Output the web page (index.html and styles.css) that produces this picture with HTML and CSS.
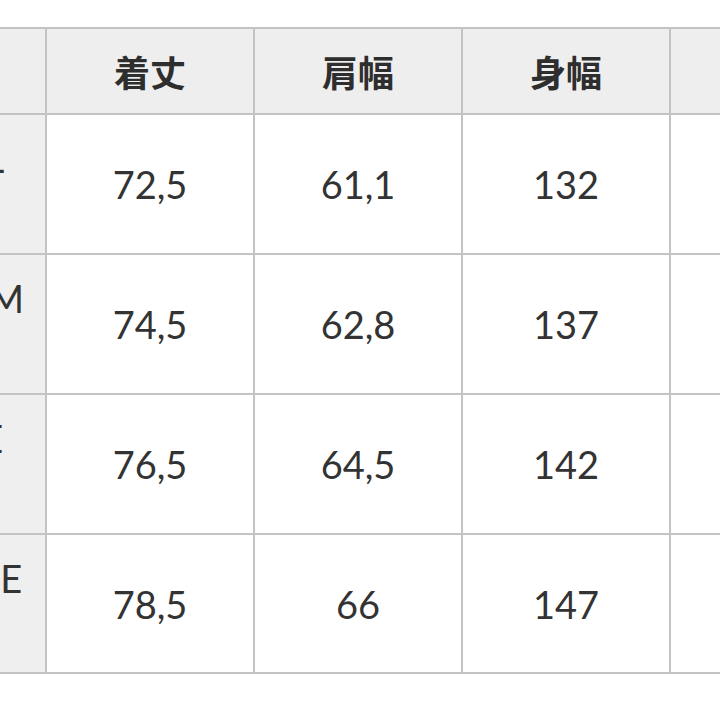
FILE: index.html
```html
<!DOCTYPE html>
<html lang="ja">
<head>
<meta charset="utf-8">
<title>サイズ表</title>
<link rel="stylesheet" href="styles.css">
</head>
<body>
<div class="sheet">
  <table class="size-table">
    <colgroup>
      <col class="c"><col class="c"><col class="c"><col class="c"><col class="c">
    </colgroup>
    <thead>
      <tr>
        <th class="corner"></th>
        <th>着丈</th>
        <th>肩幅</th>
        <th>身幅</th>
        <th class="more"></th>
      </tr>
    </thead>
    <tbody>
      <tr>
        <th class="label">SMALL</th>
        <td>72,5</td><td>61,1</td><td>132</td><td class="more"></td>
      </tr>
      <tr>
        <th class="label">MEDIUM</th>
        <td>74,5</td><td>62,8</td><td>137</td><td class="more"></td>
      </tr>
      <tr>
        <th class="label">LARGE</th>
        <td>76,5</td><td>64,5</td><td>142</td><td class="more"></td>
      </tr>
      <tr class="last">
        <th class="label">X-LARGE</th>
        <td>78,5</td><td>66</td><td>147</td><td class="more"></td>
      </tr>
    </tbody>
  </table>
</div>
</body>
</html>
```

FILE: styles.css
```css
html, body {
  margin: 0;
  padding: 0;
  background: #ffffff;
  overflow: hidden;
}

body {
  width: 720px;
  height: 720px;
}

.sheet {
  margin-left: -163px;
  padding-top: 27px;
}

.size-table {
  border-collapse: collapse;
  table-layout: fixed;
  width: 1042px;
  font-family: Lato, "Noto Sans CJK JP", sans-serif;
  color: #333333;
}

.size-table .c {
  width: 208px;
}

.size-table th,
.size-table td {
  border: 2px solid #c3c3c3;
  text-align: center;
  padding: 0;
}

.size-table thead th {
  height: 84px;
  background: #eeeeee;
  font-family: "Noto Sans CJK JP", sans-serif;
  font-weight: 700;
  font-size: 36px;
  color: #2e2e2e;
}

.size-table tbody td {
  height: 138px;
  font-size: 38px;
  font-weight: 400;
  background: #ffffff;
  vertical-align: middle;
}

.size-table tbody tr.last td,
.size-table tbody tr.last th {
  height: 137px;
}

.size-table .label {
  background: #efefef;
  font-family: Lato, sans-serif;
  font-weight: 400;
  font-size: 38px;
  vertical-align: top;
  padding-top: 20px;
  padding-left: 4px;
  height: 118px;
}

.size-table tbody tr.last th.label {
  height: 117px;
}
```
